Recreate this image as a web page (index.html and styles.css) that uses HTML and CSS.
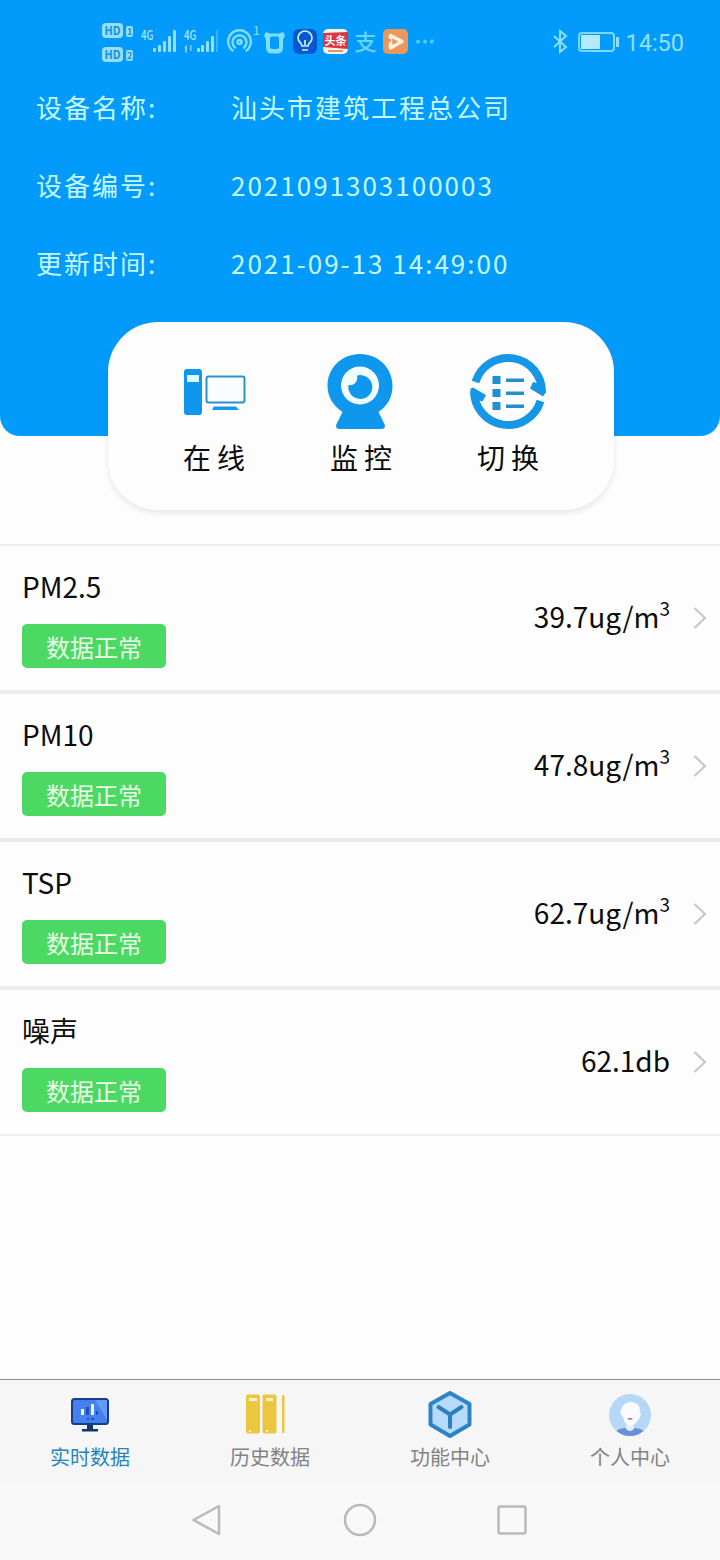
FILE: index.html
```html
<!DOCTYPE html>
<html lang="zh-CN">
<head>
<meta charset="utf-8">
<title>实时数据</title>
<link rel="stylesheet" href="styles.css">
</head>
<body>
<div class="app">
  <header class="hero">
    <div class="status">
      <svg class="status-left" width="350" height="56" viewBox="0 0 350 56">
        <g fill="#93dffc">
          <rect x="2" y="9" width="21" height="15" rx="4"/>
          <rect x="2" y="33" width="21" height="15" rx="4"/>
          <rect x="26" y="12" width="7" height="11" rx="2"/>
          <rect x="26" y="36" width="7" height="11" rx="2"/>
          <rect x="53" y="34" width="3" height="4" rx="1"/><rect x="58" y="31" width="3" height="7" rx="1"/><rect x="63" y="27" width="3" height="11" rx="1"/><rect x="68" y="22" width="3" height="16" rx="1"/><rect x="73" y="16" width="3" height="22" rx="1"/>
          <rect x="97" y="34" width="3" height="4" rx="1"/><rect x="101" y="31" width="3" height="7" rx="1"/><rect x="106" y="27" width="3" height="11" rx="1"/><rect x="111" y="22" width="3" height="16" rx="1"/>
          <rect x="116" y="16" width="2" height="22" opacity=".35"/>
          <path d="M84 34l3-3.500v8h-2V34zM90 31h1.500v6H90z" opacity=".8"/>
        </g>
        <g class="tiny" font-weight="700">
          <text x="4.500" y="21" font-size="12" fill="#178fdf" textLength="16" lengthAdjust="spacingAndGlyphs">HD</text>
          <text x="4.500" y="45" font-size="12" fill="#178fdf" textLength="16" lengthAdjust="spacingAndGlyphs">HD</text>
          <text x="27" y="21" font-size="9" fill="#178fdf">1</text>
          <text x="27" y="45" font-size="9" fill="#178fdf">2</text>
          <text x="41" y="25.500" font-size="13" font-weight="500" fill="#a5e6fd" textLength="12.500" lengthAdjust="spacingAndGlyphs">4G</text>
          <text x="84" y="25.500" font-size="13" font-weight="500" fill="#a5e6fd" textLength="12.500" lengthAdjust="spacingAndGlyphs">4G</text>
          <text x="153" y="21" font-size="12" font-weight="400" fill="#93dffc">1</text>
        </g>
        <g fill="none" stroke="#7fdcfb" stroke-width="2.500" stroke-linecap="round">
          <circle cx="139.500" cy="28" r="2"/>
          <path d="M135 33.500a7 7 0 1 1 9 0M132.500 36.500a11.300 11.300 0 1 1 14 0"/>
        </g>
        <path fill-rule="evenodd" d="M166 18l4 1.500h9l4-1.500 2 3.500-2 4v8q0 6-6 6h-5q-6 0-6-6v-8l-2-4zM172 22.500q-2 0-2 2v8q0 2.500 2.500 2.500h4q2.500 0 2.500-2.500v-8q0-2-2-2z" fill="#80defa"/>
        <rect x="193" y="15" width="24" height="25" rx="6" fill="#0757d2"/>
        <g fill="none" stroke="#c7f2ff" stroke-width="1.700"><path d="M202 32c0-3-4-4-4-8a7 7 0 0 1 14 0c0 4-4 5-4 8zM202 36h6M205 31v-5"/></g>
        <rect x="223" y="15" width="25" height="25" rx="5" fill="#f6f2e9"/>
        <path d="M223 19l25-1v17l-25-2z" fill="#de3543"/>
        <text class="tiny" x="224.500" y="31" font-size="11" font-weight="700" fill="#fff" textLength="22">头条</text>
        <path d="M228 36h15v2h-15z" fill="#d89d67"/>
        <text class="tiny" x="254.500" y="36" font-size="22" font-weight="500" fill="#65d7fb">支</text>
        <rect x="283" y="15" width="25" height="25" rx="5" fill="#ee9659"/>
        <path d="M290.500 21.500l11.500 6-11.500 6.500z" fill="#ee9659" stroke="#fff3e4" stroke-width="3.500" stroke-linejoin="round"/>
        <path d="M288 25h3v3h-3z" fill="#ee9659"/>
        <g fill="#55cdfd"><circle cx="318" cy="27.500" r="1.900"/><circle cx="325" cy="27.500" r="1.900"/><circle cx="332" cy="27.500" r="1.900"/></g>
      </svg>
      <div class="status-right">
        <svg width="72" height="32" viewBox="0 0 72 32">
          <path d="M3 10l12 11-6 5V5l6 5L3 21" fill="none" stroke="#8cdefc" stroke-width="2"/>
          <rect x="28" y="7" width="35" height="18" rx="3" fill="none" stroke="#7cd9fb" stroke-width="2"/>
          <path d="M30 9h19v14H30z" fill="#b4eaff"/><path d="M65 11h3v10h-3z" fill="#8cdefc"/>
        </svg>
        <span class="clock">14:50</span>
      </div>
    </div>
    <dl class="info">
      <dt>设备名称:</dt><dd>汕头市建筑工程总公司</dd>
      <dt>设备编号:</dt><dd>2021091303100003</dd>
      <dt>更新时间:</dt><dd>2021-09-13 14:49:00</dd>
    </dl>
  </header>

  <section class="actions">
    <div class="action">
      <svg width="80" height="80" viewBox="0 0 80 80">
        <rect x="10" y="18" width="18" height="46" rx="3" fill="#0f97ee"/>
        <path d="M13 24h12v7H13z" fill="#dcfaff"/>
        <rect x="32.500" y="25.500" width="38" height="26" rx="2" fill="#fafdff" stroke="#2b91cc" stroke-width="2"/>
        <path d="M40 55.500h22l3 3.500H38z" fill="#1698e6"/>
      </svg>
      <span>在线</span>
    </div>
    <div class="action">
      <svg width="80" height="80" viewBox="0 0 80 80">
        <path d="M39 3C20.500 3 6.500 17 6.500 35c0 11 6 20 15 26l-6 12q-1.500 4 2 5h44q3.500-1 2-5l-6-12c9-6 14-15 14-26C71.500 17 57.500 3 39 3z" fill="#0f97ee"/>
        <circle cx="39" cy="34.500" r="19" fill="#f2fdff"/>
        <path d="M36 24.500a12 12 0 1 1-8.500 9.500c5 1 10-3 8.500-9.500z" fill="#0f97ee"/>
      </svg>
      <span>监控</span>
    </div>
    <div class="action">
      <svg width="80" height="80" viewBox="0 0 80 80">
        <g fill="none" stroke="#1696e7" stroke-width="8">
          <path d="M7.500 31A34 34 0 0 1 74 42"/><path d="M72.500 50A34 34 0 0 1 6 40"/>
        </g>
        <path d="M78 41l-3 4.500-13-8L65 31l9 2zM2 38l3-1.500L18 44l-3.500 6.500L8 49z" fill="#1696e7"/>
        <path d="M24.500 25h8v8h-8zM24.500 38h8v8h-8zM24.500 51h8v8h-8zM38 27.500h18v3.500H38zM38 40.500h18V44H38zM38 53.500h18V57H38z" fill="#228fd1"/>
      </svg>
      <span>切换</span>
    </div>
  </section>

  <main class="list">
    <article class="row">
      <div><h2>PM2.5</h2><span class="badge">数据正常</span></div>
      <p class="value">39.7ug/m<sup>3</sup></p>
      <svg class="arrow" width="14" height="24" viewBox="0 0 14 24"><path d="M1.500 2l10.500 10L1.500 22"/></svg>
    </article>
    <article class="row">
      <div><h2>PM10</h2><span class="badge">数据正常</span></div>
      <p class="value">47.8ug/m<sup>3</sup></p>
      <svg class="arrow" width="14" height="24" viewBox="0 0 14 24"><path d="M1.500 2l10.500 10L1.500 22"/></svg>
    </article>
    <article class="row">
      <div><h2>TSP</h2><span class="badge">数据正常</span></div>
      <p class="value">62.7ug/m<sup>3</sup></p>
      <svg class="arrow" width="14" height="24" viewBox="0 0 14 24"><path d="M1.500 2l10.500 10L1.500 22"/></svg>
    </article>
    <article class="row">
      <div><h2>噪声</h2><span class="badge">数据正常</span></div>
      <p class="value">62.1db</p>
      <svg class="arrow" width="14" height="24" viewBox="0 0 14 24"><path d="M1.500 2l10.500 10L1.500 22"/></svg>
    </article>
  </main>

  <nav class="tabs">
    <a class="tab active">
      <svg width="50" height="50" viewBox="0 0 50 50">
        <path d="M22 34h6v5h5v2.500H17V39h5z" fill="#12376c"/>
        <rect x="7" y="9" width="36" height="25" rx="2.500" fill="#4580f1" stroke="#173d86" stroke-width="2"/>
        <path d="M30 10h12v20z" fill="#629af6"/>
        <path d="M16 19h3v6h-3zM26 14h3v11h-3z" fill="#e9f8ff"/><path d="M21 17h3v8h-3zM31 21h2v4h-2z" fill="#204fba"/>
        <path d="M22 28h2v2h-2zM26 28h3v2h-3z" fill="#2451b2"/>
      </svg>
      <span>实时数据</span>
    </a>
    <a class="tab">
      <svg width="50" height="50" viewBox="0 0 50 50">
        <g fill="#edc63f"><rect x="1" y="4.500" width="14" height="39" rx="2"/><rect x="17.500" y="4.500" width="14" height="39" rx="2"/><rect x="37" y="5" width="2.500" height="38" rx="1"/></g>
        <path d="M4 8h8v3H4zM21 8h7v3h-7zM4 40h2v2H4zM21 40h2v2h-2z" fill="#fff5c9"/>
      </svg>
      <span>历史数据</span>
    </a>
    <a class="tab">
      <svg width="50" height="50" viewBox="0 0 50 50">
        <path d="M25 3L44.500 14v20.500L25 46 5.500 34.500V14z" fill="#b7dbff" stroke="#2c84c5" stroke-width="4" stroke-linejoin="round"/>
        <path d="M13.500 17L25 24.500 36.500 17M25 24.500V37" fill="none" stroke="#2c7fbd" stroke-width="4" stroke-linecap="round" stroke-linejoin="round"/>
      </svg>
      <span>功能中心</span>
    </a>
    <a class="tab">
      <svg width="50" height="50" viewBox="0 0 50 50">
        <defs><clipPath id="face"><circle cx="25" cy="25" r="21"/></clipPath></defs>
        <g clip-path="url(#face)">
          <path d="M4 4h42v43H4z" fill="#b7d7f7"/>
          <path d="M8 47q1-8 12-9h10q11 1 12 9z" fill="#688fd9"/>
          <path d="M21 32h8v7q-4 4-8 0z" fill="#e3edfc"/>
          <path d="M17 17q3-5 9-5 10 1 9 10l1 2q-3 10-11 12-5-1-7-9l-3-4z" fill="#fafbff"/>
        </g>
        <path d="M22 28h6q-3 4-6 0z" fill="#b77b88"/>
      </svg>
      <span>个人中心</span>
    </a>
  </nav>
  <footer class="system">
    <svg width="34" height="34" viewBox="0 0 34 34"><path d="M28 3v28L2.500 17z"/></svg>
    <svg width="34" height="34" viewBox="0 0 34 34"><circle cx="17" cy="17" r="15"/></svg>
    <svg width="34" height="34" viewBox="0 0 34 34"><rect x="3.500" y="3.500" width="27" height="27" rx="1.500"/></svg>
  </footer>
</div>
</body>
</html>
```
FILE: styles.css
```css
* { box-sizing: border-box; }
body { margin: 0; background: #fdfdfd; color: #0c0c0c; font-family: "Noto Sans CJK SC", sans-serif; }
svg { display: block; flex: none; }
.app { display: flex; flex-direction: column; height: 1560px; width: 720px; overflow: hidden; }
.hero { height: 436px; flex: none; background: #029bfb; border-radius: 0 0 20px 20px; }
.status { display: flex; justify-content: space-between; height: 68px; padding: 14px 36px 0 100px; }
.status-right { display: flex; height: 56px; align-items: center; }
.status-right svg { margin-right: 2px; }
.clock { font: 23.500px/32px Roboto, sans-serif; color: #91e1fb; padding-top: 1px; }
.tiny { font-family: "Noto Sans CJK SC", sans-serif; }
.info { display: grid; grid-template-columns: 195px 1fr; grid-auto-rows: 78px; margin: 0; padding-left: 36px; font-size: 26px; line-height: 78px; letter-spacing: 2px; color: #c6f8ff; }
.info dd { margin: 0; }
.actions { position: relative; display: grid; grid-template-columns: repeat(3, 147px); justify-content: center; flex: none; width: 506px; height: 188px; margin: -114px 0 0 108px; padding-top: 29px; background: #fdfdfd; border-radius: 50px; box-shadow: 0 3px 6px rgba(0, 0, 0, .09); }
.action { display: flex; flex-direction: column; align-items: center; }
.action span { margin-top: 6px; font-size: 28px; line-height: 40px; letter-spacing: 6px; padding-left: 6px; }
.list { margin-top: 34px; border-top: 2px solid #eee; flex: none; }
.row { display: flex; height: 148px; padding: 0 13px 0 22px; align-items: center; border-bottom: 4px solid #ebebeb; }
.row:last-child { height: 146px; border-bottom: 2px solid #f0f0f0; }
h2 { margin: -2px 0 18px; font-size: 28px; font-weight: 400; line-height: 40px; }
.badge { display: block; width: 144px; height: 44px; border-radius: 5px; background: #4bd863; color: #ebffe9; font-size: 24px; line-height: 45px; text-align: center; }
.value { margin: -4px 23px 0 auto; font-size: 28px; line-height: 40px; }
.value sup { font-size: 19px; line-height: 0; vertical-align: 12px; }
.arrow path { fill: none; stroke: #c5c5c5; stroke-width: 2; }
.tabs { display: grid; grid-template-columns: repeat(4, 1fr); height: 104px; margin-top: auto; padding-top: 10px; flex: none; background: #f6f6f6; border-top: 1px solid #8d8d8d; }
.tab { display: flex; flex-direction: column; align-items: center; color: #828282; font-size: 20px; line-height: 30px; }
.tab span { margin-top: 2px; }
.tab.active { color: #2584bd; }
.system { display: flex; justify-content: center; gap: 118px; height: 77px; padding-top: 20px; background: #f9f9f9; flex: none; }
.system path, .system circle, .system rect { fill: none; stroke: #b9b9b9; stroke-width: 2.5; stroke-linejoin: round; }
```
